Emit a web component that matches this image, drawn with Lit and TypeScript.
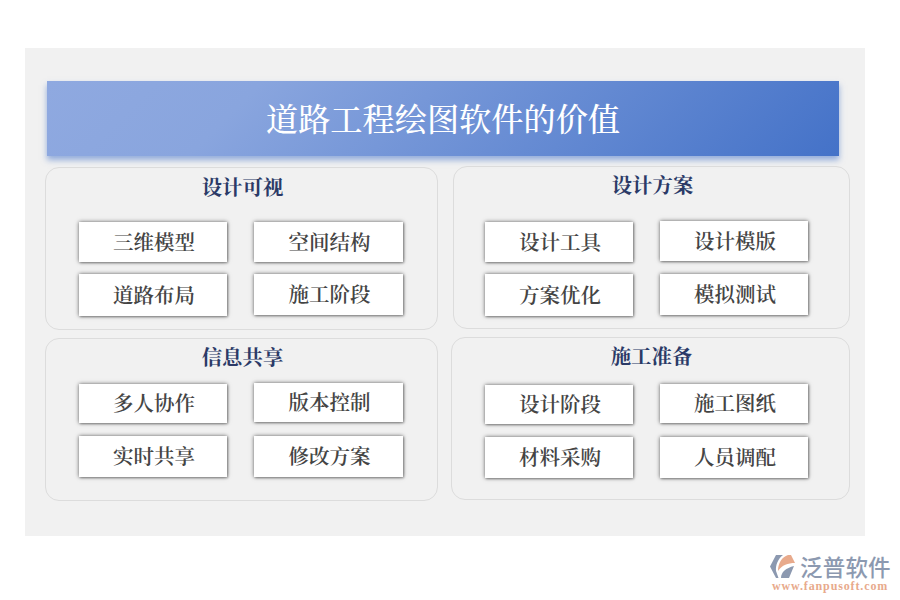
import { LitElement, html, css } from "lit";
import { customElement } from "lit/decorators.js";

type Item = { t: string; h: number; mt: number };
type Card = { title: string; w: number; h: number; ml: number; mt: number; tt: number; pl: number; gap: number; cw: number; cols: Item[][] };

const rows: Card[][] = [
  [
    { title: "设计可视", w: 393, h: 163, ml: 20, mt: 11, tt: 7, pl: 33, gap: 23, cw: 149, cols: [
      [{ t: "三维模型", h: 40, mt: 0 }, { t: "道路布局", h: 42, mt: 12 }],
      [{ t: "空间结构", h: 40, mt: 0 }, { t: "施工阶段", h: 41, mt: 12 }],
    ] },
    { title: "设计方案", w: 397, h: 163, ml: 15, mt: 10, tt: 6, pl: 31, gap: 24, cw: 148, cols: [
      [{ t: "设计工具", h: 40, mt: 1 }, { t: "方案优化", h: 42, mt: 12 }],
      [{ t: "设计模版", h: 40, mt: 0 }, { t: "模拟测试", h: 41, mt: 13 }],
    ] },
  ],
  [
    { title: "信息共享", w: 393, h: 163, ml: 20, mt: 8, tt: 6, pl: 33, gap: 14, cw: 149, cols: [
      [{ t: "多人协作", h: 39, mt: 1 }, { t: "实时共享", h: 41, mt: 13 }],
      [{ t: "版本控制", h: 39, mt: 0 }, { t: "修改方案", h: 41, mt: 14 }],
    ] },
    { title: "施工准备", w: 399, h: 163, ml: 13, mt: 7, tt: 6, pl: 33, gap: 16, cw: 148, cols: [
      [{ t: "设计阶段", h: 39, mt: 1 }, { t: "材料采购", h: 41, mt: 13 }],
      [{ t: "施工图纸", h: 39, mt: 0 }, { t: "人员调配", h: 41, mt: 14 }],
    ] },
  ],
];

@customElement("app-root")
export class AppRoot extends LitElement {
  static styles = css`
    :host { display: block; width: 900px; height: 600px; background: #fff; overflow: hidden;
      font-family: "Noto Serif CJK SC", "Liberation Serif", "Noto Sans CJK SC", serif; }
    .stage { margin: 48px 35px 0 25px; height: 488px; width: 840px; background: #f1f1f1; padding-top: 33px; box-sizing: border-box; }
    .banner { margin-left: 22px; width: 792px; height: 75px; box-sizing: border-box; padding-bottom: 3px; display: flex; align-items: center; justify-content: center;
      background: linear-gradient(135deg, #8fa9e0 0%, #89a5de 25%, #4472c8 100%); color: #fff; font-size: 32.2px; font-weight: 500;
      box-shadow: 0 4px 6px rgba(68, 114, 200, 0.55); }
    .row { display: flex; align-items: flex-start; }
    .card { box-sizing: border-box; border: 1px solid #dcdcdc; border-radius: 14px; }
    .title { text-align: center; padding-left: 2px; font-size: 20.4px; font-weight: 700; color: #2b3a67; line-height: 24px; }
    .cols { display: flex; column-gap: 26px; }
    .col { width: 148px; }
    .col + .col { margin-left: 1px; }
    .item { box-sizing: border-box; width: 100%; padding: 0 0 3px 2px; display: flex; align-items: center; justify-content: center; background: #fff;
      color: #444; font-size: 20.5px; font-weight: 600; box-shadow: 0 0 4px rgba(0,0,0,.6), 1px 1px 2px rgba(0,0,0,.25); }
    .logo { position: absolute; left: 769px; top: 553px; width: 125px; height: 40px; }
    .mark { position: absolute; left: 0; top: 2px; }
    .brand { position: absolute; left: 31px; top: 1px; height: 24px; font: 500 22.5px/24px "Noto Sans CJK SC", sans-serif; letter-spacing: 0.2px; color: #8c99b0; white-space: nowrap; }
    .url { position: absolute; left: 3px; top: 27px; height: 12px; font: 700 12px/12px "Liberation Serif", serif; letter-spacing: 0.87px; color: #e8aa8c; white-space: nowrap; }
  `;

  render() {
    return html`
      <div class="stage">
        <div class="banner">道路工程绘图软件的价值</div>
        ${rows.map((row) => html`
          <div class="row">
            ${row.map((c) => html`
              <div class="card" style="width:${c.w}px;height:${c.h}px;margin-left:${c.ml}px;margin-top:${c.mt}px;padding-top:${c.tt}px">
                <div class="title">${c.title}</div>
                <div class="cols" style="padding-left:${c.pl}px;margin-top:${c.gap}px">
                  ${c.cols.map((col, i) => html`
                    <div class="col" style="width:${i === 1 ? c.cw : 148}px">
                      ${col.map((it) => html`<div class="item" style="height:${it.h}px;margin-top:${it.mt}px">${it.t}</div>`)}
                    </div>`)}
                </div>
              </div>`)}
          </div>`)}
      </div>
      <div class="logo">
        <svg class="mark" width="27" height="24" viewBox="0 0 27 24">
          <path d="M7 0 L14 0 C9 4 6.5 10 7 16 L9.5 23 L7 23 L1 11.5 Z" fill="#8c99b0"/>
          <path d="M9 16 C9 8 13 2 19 0 L22 0 L26 8 C19 8 13 10 9 16 Z" fill="#e8aa8c"/>
          <path d="M12 23 C12 17 17 13 25 11 L20 23 Z" fill="#8c99b0"/>
        </svg>
        <div class="brand">泛普软件</div>
        <div class="url">www.fanpusoft.com</div>
      </div>
    `;
  }
}
